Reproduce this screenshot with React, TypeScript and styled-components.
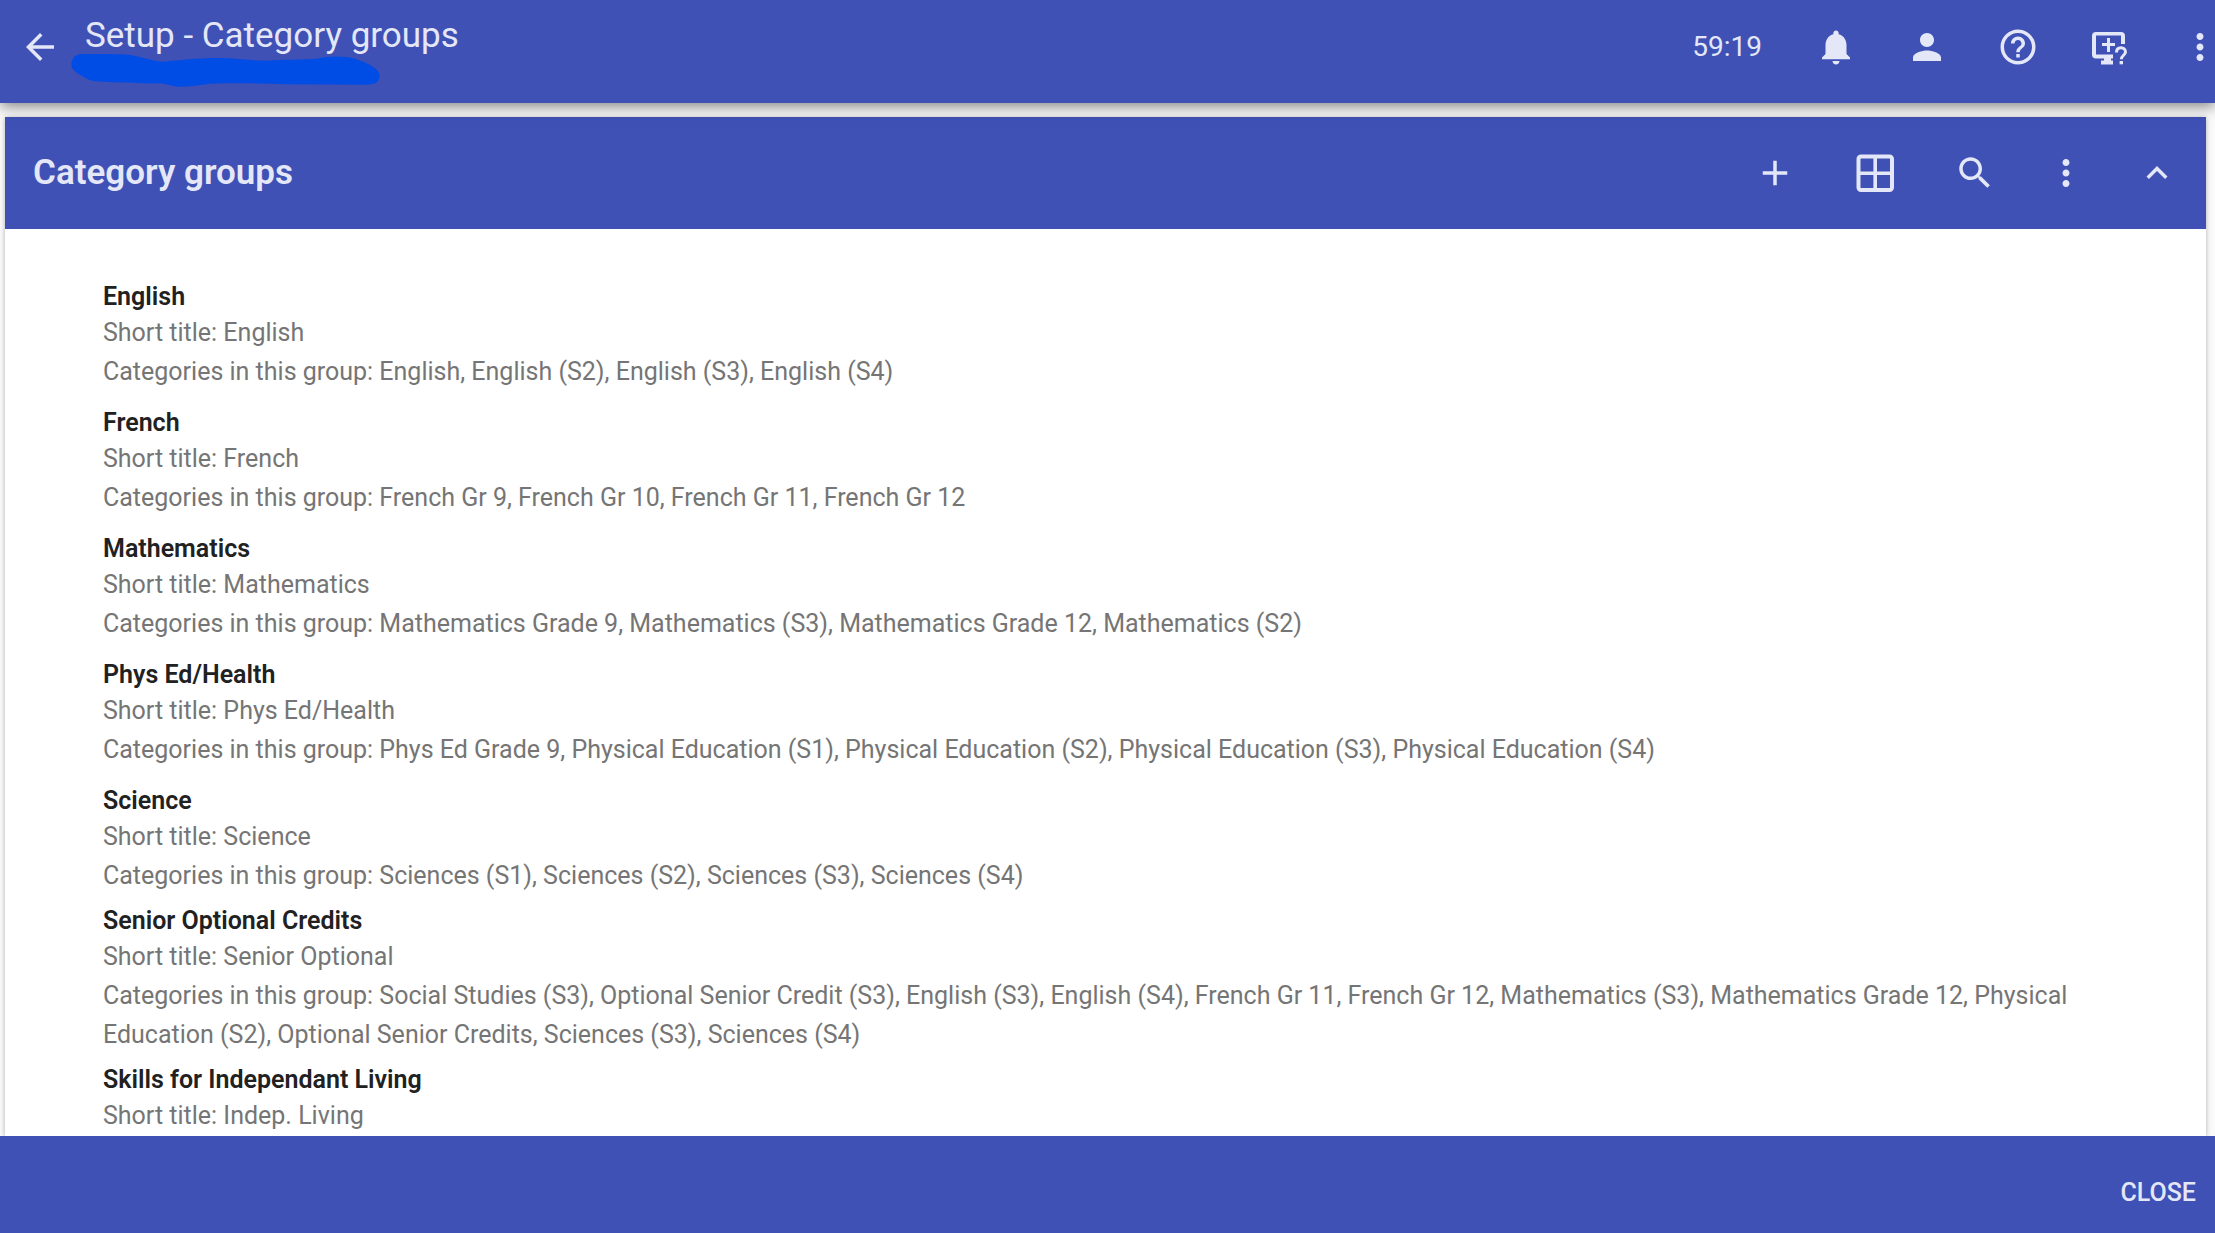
import React from 'react';
import styled, { createGlobalStyle } from 'styled-components';

const GlobalStyle = createGlobalStyle`
  *, *::before, *::after { box-sizing: border-box; }
  body {
    margin: 0;
    background: #fafafa;
    font-family: Roboto, "Liberation Sans", sans-serif;
    color: #212121;
  }
  h1, h2, h3, p, ul { margin: 0; padding: 0; }
`;

const primary = '#3f51b5';
const onPrimary = '#e4e7f8';

const Page = styled.div`
  display: flex;
  flex-direction: column;
  height: 100vh;
  overflow: hidden;
`;

const AppBar = styled.header`
  position: relative;
  z-index: 2;
  flex: none;
  display: flex;
  align-items: center;
  padding: 15px 0 24px 19px;
  background: ${primary};
  color: ${onPrimary};
  box-shadow: 0 3px 14px rgba(0, 0, 0, 0.5);
`;

const IconButton = styled.button`
  display: flex;
  flex: none;
  padding: 0;
  border: 0;
  background: none;
  color: inherit;
  cursor: pointer;
`;

const Icon = styled.svg<{ $size?: number }>`
  display: block;
  width: ${({ $size = 42 }) => $size}px;
  height: ${({ $size = 42 }) => $size}px;
  fill: currentColor;
`;

const TitleBlock = styled.div`
  position: relative;
  flex: 1;
  height: 64px;
  margin-left: 24px;
`;

const PageTitle = styled.h1`
  font-size: 35px;
  font-weight: 450;
  line-height: 42px;
`;

const Marker = styled.svg`
  position: absolute;
  left: -15px;
  top: 38px;
  width: 311px;
  height: 35px;
  fill: #004de6;
`;

const Timer = styled.span`
  margin-right: 4px;
  font-size: 28px;
  line-height: 42px;
`;

const Actions = styled.div<{ $gap: number }>`
  display: flex;
  align-items: center;
  gap: ${({ $gap }) => $gap}px;
`;

const BarActions = styled(Actions)`
  margin-right: -6px;
`;

const Card = styled.main`
  flex: 1;
  min-height: 0;
  display: flex;
  flex-direction: column;
  margin: 14px 9px 0 5px;
  background: #fff;
  box-shadow: 0 1px 5px rgba(0, 0, 0, 0.3);
`;

const CardHeader = styled.div`
  flex: none;
  display: flex;
  align-items: center;
  justify-content: space-between;
  height: 112px;
  padding: 0 28px;
  background: ${primary};
  color: ${onPrimary};
`;

const CardTitle = styled.h2`
  font-size: 35px;
  font-weight: 600;
  line-height: 42px;
`;

const GroupList = styled.ul`
  flex: 1;
  min-height: 0;
  padding: 41px 98px 0;
  overflow-y: auto;
  scrollbar-width: none;
  list-style: none;
`;

const GroupItem = styled.li<{ $roomy: boolean }>`
  display: flex;
  flex-direction: column;
  justify-content: flex-end;
  min-height: ${({ $roomy }) => ($roomy ? 126 : 0)}px;
  padding: 4px 0 5px;
`;

const GroupName = styled.h3`
  font-size: 25px;
  font-weight: 600;
  line-height: 33px;
`;

const Detail = styled.p`
  font-size: 25px;
  font-weight: 450;
  line-height: 39px;
  color: #757575;
`;

const Footer = styled.footer`
  position: relative;
  z-index: 1;
  flex: none;
  display: flex;
  justify-content: flex-end;
  padding: 36px 19px 19px;
  background: ${primary};
`;

const CloseButton = styled.button`
  padding: 0;
  border: 0;
  background: none;
  color: ${onPrimary};
  font: 500 25px/42px Roboto, "Liberation Sans", sans-serif;
  cursor: pointer;
`;

const paths = {
  back: 'M20 11H7.83l5.59-5.59L12 4l-8 8 8 8 1.41-1.41L7.83 13H20v-2z',
  bell: 'M12 22c1.1 0 2-.9 2-2h-4c0 1.1.89 2 2 2zm6-6v-5c0-3.07-1.64-5.64-4.5-6.32V4c0-.83-.67-1.5-1.5-1.5s-1.5.67-1.5 1.5v.68C7.63 5.36 6 7.92 6 11v5l-2 2v1h16v-1l-2-2z',
  person: 'M12 12c2.21 0 4-1.79 4-4s-1.79-4-4-4-4 1.79-4 4 1.79 4 4 4zm0 2c-2.67 0-8 1.34-8 4v2h16v-2c0-2.66-5.33-4-8-4z',
  help: 'M11 18h2v-2h-2v2zm1-16C6.48 2 2 6.48 2 12s4.48 10 10 10 10-4.48 10-10S17.52 2 12 2zm0 18c-4.41 0-8-3.59-8-8s3.59-8 8-8 8 3.59 8 8-3.59 8-8 8zm0-14c-2.21 0-4 1.79-4 4h2c0-1.1.9-2 2-2s2 .9 2 2c0 2-3 1.75-3 5h2c0-2.25 3-2.5 3-5 0-2.21-1.79-4-4-4z',
  more: 'M12 8c1.1 0 2-.9 2-2s-.9-2-2-2-2 .9-2 2 .9 2 2 2zm0 2c-1.1 0-2 .9-2 2s.9 2 2 2 2-.9 2-2-.9-2-2-2zm0 6c-1.1 0-2 .9-2 2s.9 2 2 2 2-.9 2-2-.9-2-2-2z',
  add: 'M19 13h-6v6h-2v-6H5v-2h6V5h2v6h6v2z',
  search: 'M15.5 14h-.79l-.28-.27C15.41 12.59 16 11.11 16 9.5 16 5.91 13.09 3 9.5 3S3 5.91 3 9.5 5.91 16 9.5 16c1.61 0 3.09-.59 4.23-1.57l.27.28v.79l5 4.99L20.49 19l-4.99-5zm-6 0C7.01 14 5 11.99 5 9.5S7.01 5 9.5 5 14 7.01 14 9.5 11.99 14 9.5 14z',
  collapse: 'M12 8l-6 6 1.41 1.41L12 10.83l4.59 4.58L18 14z',
};

function ActionButton({ name, label }: { name: keyof typeof paths; label: string }) {
  return (
    <IconButton type="button" aria-label={label}>
      <Icon viewBox="0 0 24 24" aria-hidden="true">
        <path d={paths[name]} />
      </Icon>
    </IconButton>
  );
}

function RemoteHelpButton() {
  return (
    <IconButton type="button" aria-label="Remote support">
      <Icon viewBox="-1 0 42 42" aria-hidden="true">
        <path d="M7 6h25a4 4 0 0 1 4 4v8h-4V9.500H7v19h17v4h-2v2h2v4H12v-4h3v-2H7a4 4 0 0 1-4-4V10a4 4 0 0 1 4-4z" />
        <path d="M18 12h3v5h5v3h-5v6h-3v-6h-5v-3h5z" />
        <path
          d="M27.500 26.500c0-3.200 2-4.800 4.500-4.800s4.500 1.600 4.500 4.300c0 3-4.200 3.600-4.200 7.200"
          fill="none"
          stroke="currentColor"
          strokeWidth="3"
        />
        <path d="M30.600 35h3.400v3.300h-3.400z" />
      </Icon>
    </IconButton>
  );
}

function GridButton() {
  return (
    <IconButton type="button" aria-label="Table view">
      <Icon $size={50} viewBox="0 0 50 50" aria-hidden="true">
        <rect x="8.500" y="8.500" width="33.500" height="33.500" rx="2.500" fill="none" stroke="currentColor" strokeWidth="4" />
        <path d="M23.400 9h3.600v32h-3.600zM9 23.400h32v3.600H9z" />
      </Icon>
    </IconButton>
  );
}

interface Group {
  name: string;
  shortTitle: string;
  categories?: string[];
  roomy?: boolean;
}

const groups: Group[] = [
  {
    name: 'English',
    shortTitle: 'English',
    categories: ['English', 'English (S2)', 'English (S3)', 'English (S4)'],
    roomy: true,
  },
  {
    name: 'French',
    shortTitle: 'French',
    categories: ['French Gr 9', 'French Gr 10', 'French Gr 11', 'French Gr 12'],
    roomy: true,
  },
  {
    name: 'Mathematics',
    shortTitle: 'Mathematics',
    categories: ['Mathematics Grade 9', 'Mathematics (S3)', 'Mathematics Grade 12', 'Mathematics (S2)'],
    roomy: true,
  },
  {
    name: 'Phys Ed/Health',
    shortTitle: 'Phys Ed/Health',
    categories: [
      'Phys Ed Grade 9',
      'Physical Education (S1)',
      'Physical Education (S2)',
      'Physical Education (S3)',
      'Physical Education (S4)',
    ],
    roomy: true,
  },
  {
    name: 'Science',
    shortTitle: 'Science',
    categories: ['Sciences (S1)', 'Sciences (S2)', 'Sciences (S3)', 'Sciences (S4)'],
    roomy: true,
  },
  {
    name: 'Senior Optional Credits',
    shortTitle: 'Senior Optional',
    categories: [
      'Social Studies (S3)',
      'Optional Senior Credit (S3)',
      'English (S3)',
      'English (S4)',
      'French Gr 11',
      'French Gr 12',
      'Mathematics (S3)',
      'Mathematics Grade 12',
      'Physical Education (S2)',
      'Optional Senior Credits',
      'Sciences (S3)',
      'Sciences (S4)',
    ],
  },
  { name: 'Skills for Independant Living', shortTitle: 'Indep. Living' },
];

export default function App() {
  return (
    <Page>
      <GlobalStyle />
      <AppBar>
        <ActionButton name="back" label="Back" />
        <TitleBlock>
          <PageTitle>Setup - Category groups</PageTitle>
          <Marker viewBox="210 158 933 105" aria-hidden="true">
            <path d="M240 162C290 161 340 161 385 163C425 168 450 181 490 184C540 180 590 173 650 173C710 173 750 181 800 181C860 177 910 178 950 175C990 165 1035 167 1065 175C1105 188 1140 205 1139 228C1137 246 1125 252 1105 253L860 252C780 248 700 249 630 250C600 254 570 259 535 259C515 258 500 251 480 249C410 250 340 246 285 243C262 240 250 228 232 219C217 208 212 198 215 185C219 170 228 163 240 162Z" />
          </Marker>
        </TitleBlock>
        <BarActions $gap={49}>
          <Timer>59:19</Timer>
          <ActionButton name="bell" label="Notifications" />
          <ActionButton name="person" label="Account" />
          <ActionButton name="help" label="Help" />
          <RemoteHelpButton />
          <ActionButton name="more" label="More options" />
        </BarActions>
      </AppBar>

      <Card>
        <CardHeader>
          <CardTitle>Category groups</CardTitle>
          <Actions $gap={49}>
            <Actions $gap={54}>
              <ActionButton name="add" label="Add group" />
              <GridButton />
              <ActionButton name="search" label="Search" />
            </Actions>
            <ActionButton name="more" label="More actions" />
            <ActionButton name="collapse" label="Collapse" />
          </Actions>
        </CardHeader>
        <GroupList>
          {groups.map(({ name, shortTitle, categories, roomy = false }) => (
            <GroupItem key={name} $roomy={roomy}>
              <GroupName>{name}</GroupName>
              <Detail>{`Short title: ${shortTitle}`}</Detail>
              {categories && <Detail>{`Categories in this group: ${categories.join(', ')}`}</Detail>}
            </GroupItem>
          ))}
        </GroupList>
      </Card>

      <Footer>
        <CloseButton type="button">CLOSE</CloseButton>
      </Footer>
    </Page>
  );
}
